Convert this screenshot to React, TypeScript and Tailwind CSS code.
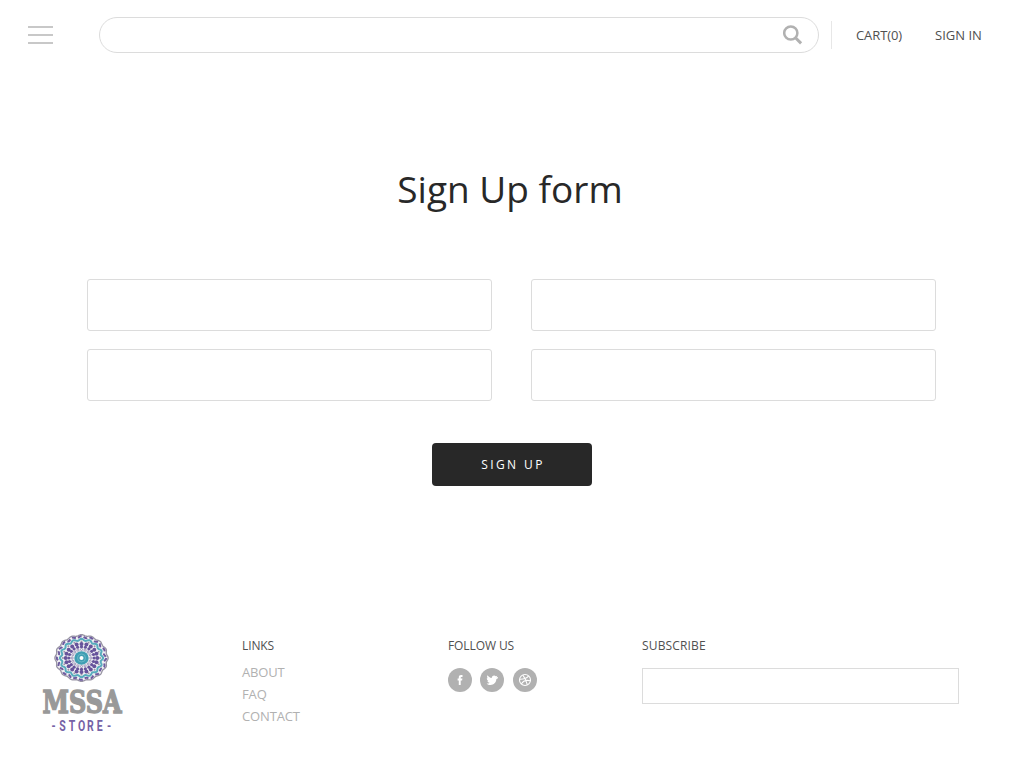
import React from "react";

const ring = (count: number) => Array.from({ length: count }, (_, i) => (i * 2 * Math.PI) / count);

function Dots({ count, rx, ry, r, fill, stroke, strokeWidth = 0 }: {
  count: number; rx: number; ry: number; r: number; fill: string; stroke?: string; strokeWidth?: number;
}) {
  return (
    <>
      {ring(count).map((a, i) => (
        <circle key={i} cx={40.5 + rx * Math.cos(a)} cy={25 + ry * Math.sin(a)} r={r} fill={fill} stroke={stroke} strokeWidth={strokeWidth} />
      ))}
    </>
  );
}

function wave(rx: number, ry: number, depth: number, lobes: number) {
  const points = ring(180).map((a) => {
    const k = 1 + depth * Math.cos(lobes * a);
    return `${(40.5 + rx * k * Math.cos(a)).toFixed(2)} ${(25 + ry * k * Math.sin(a)).toFixed(2)}`;
  });
  return `M${points.join("L")}Z`;
}

function Logo() {
  return (
    <svg width="82" height="102" viewBox="0 0 82 102" className="block overflow-visible" aria-label="MSSA Store">
      <path d={wave(26, 22.8, 0.025, 16)} fill="#f1f0f3" stroke="#9793a3" strokeWidth="1.3" />
      <path d={wave(23.8, 21, 0.04, 16)} fill="none" stroke="#6d5b9f" strokeWidth="2" strokeDasharray="4 2.2" />
      <path d={wave(20.6, 18.3, 0.05, 16)} fill="#f1f1f4" stroke="#58acbd" strokeWidth="2" />
      <Dots count={16} rx={18.6} ry={16.5} r={1} fill="#9a96aa" />
      <Dots count={20} rx={15.8} ry={14.1} r={2} fill="#67549b" />
      <Dots count={20} rx={12.6} ry={11.3} r={1.6} fill="#67549b" />
      <Dots count={16} rx={9.4} ry={8.5} r={1.1} fill="#f0f0f4" stroke="#74669b" strokeWidth={0.6} />
      <ellipse cx="40.5" cy="25" rx="7.2" ry="6.8" fill="#409eb3" />
      <circle cx="40.5" cy="25" r="4" fill="none" stroke="#72bbc9" strokeWidth="0.8" />
      <circle cx="40.5" cy="25" r="2" fill="#fff" />
      <text x="1.5" y="79.5" textLength="79" lengthAdjust="spacingAndGlyphs" fill="#999" stroke="#999" strokeWidth="1.5" className="font-['DejaVu_Serif',serif] text-[31px] font-bold">MSSA</text>
      <g transform="scale(0.75 1)">
        <text x="14 24.5 37 49.5 61.5 74.5 88" y="98.5" fill="#7562a6" className="font-['Roboto',sans-serif] text-[14px] font-bold">-STORE-</text>
      </g>
    </svg>
  );
}

function Social({ children, label }: { children: React.ReactNode; label: string }) {
  return (
    <a href="#" aria-label={label} className="block size-6 rounded-full bg-[#b1b1b1]">
      <svg width="24" height="24" viewBox="0 0 24 24">{children}</svg>
    </a>
  );
}

export default function App() {
  return (
    <div className="h-[768px] w-[1025px] overflow-hidden bg-white font-['Open_Sans',sans-serif] text-[13px] text-[#505050]">
      <header className="flex h-[70px] items-center">
        <button aria-label="Menu" className="ml-7 flex w-[25px] flex-col gap-1.5">
          <span className="h-0.5 w-full bg-[#c8c8c8]" />
          <span className="h-0.5 w-full bg-[#c8c8c8]" />
          <span className="h-0.5 w-full bg-[#c8c8c8]" />
        </button>
        <div className="ml-[46px] flex h-9 w-[720px] items-center rounded-full border border-[#dcdcdc] pr-[15px]">
          <input aria-label="Search" className="min-w-0 flex-1 bg-transparent outline-none" />
          <svg width="20" height="20" viewBox="0 0 20 20" fill="none" stroke="#b1b1b1">
            <circle cx="7.8" cy="8" r="6.6" strokeWidth="2.5" />
            <path d="M12.7 13l5.4 5.4" strokeWidth="3" />
          </svg>
        </div>
        <span className="ml-3 h-7 w-px bg-[#e7e7e7]" />
        <a href="#" className="ml-6 w-[79px] pt-0.5 tracking-[-0.1px] whitespace-nowrap">CART(0)</a>
        <a href="#" className="pt-0.5 whitespace-nowrap">SIGN IN</a>
      </header>

      <main className="h-[560px] pt-[93px]">
        <h1 className="pr-[5px] text-center text-[37px] leading-[52px] text-[#282828]">Sign Up form</h1>
        <form className="pt-16">
          <div className="ml-[87px] grid w-[849px] grid-cols-[405px_405px] gap-x-[39px] gap-y-[18px]">
            {["First name", "Last name", "Email", "Password"].map((name) => (
              <input key={name} aria-label={name} className="h-[52px] w-full rounded-[3px] border border-[#dcdcdc] px-4 outline-none" />
            ))}
          </div>
          <button type="button" className="mt-[42px] ml-[432px] block h-[43px] w-40 rounded bg-[#282828] pl-0.5 text-[12px] tracking-[2.4px] text-white">SIGN UP</button>
        </form>
      </main>

      <footer className="flex">
        <div className="ml-[41px] w-[201px] pt-[3px]"><Logo /></div>
        <div className="w-[206px] pt-[5px]">
          <h2 className="text-[12px] leading-[22px] tracking-[-0.1px]">LINKS</h2>
          <nav className="mt-1 flex flex-col text-[13px] leading-[22px] tracking-[-0.15px] text-[#b1b1b1]">
            <a href="#">ABOUT</a>
            <a href="#">FAQ</a>
            <a href="#">CONTACT</a>
          </nav>
        </div>
        <div className="w-[194px] pt-[5px]">
          <h2 className="text-[12px] leading-[22px] tracking-[-0.1px]">FOLLOW US</h2>
          <div className="mt-[11px] flex gap-2">
            <Social label="Facebook">
              <path fill="#fff" d="M10.8 17v-4.4H9.6v-2h1.2V9.3c0-1.6.9-2.3 2.3-2.3h1.4v2h-1c-.6 0-.8.3-.8.8v.8h1.7l-.3 2h-1.4V17z" />
            </Social>
            <Social label="Twitter">
              <path fill="#fff" d="M17.7 10.4l-1.3.7c-.2 3.5-2.7 5.9-5.8 5.9-1.7 0-3-.5-3.9-1.5 1.2.1 2.2-.1 2.9-.8-1.2-.2-1.9-.8-2.1-1.8h1c-1.2-.6-1.8-1.6-1.6-3l.9.4c-.9-1-.9-1.9-.3-3 1.1 1.5 2.3 2.4 4.2 2.8.1-1.5 1-2.5 2.4-2.5.7 0 1.3.2 1.7.7l1.5-.5-.8 1.4 1.5-.1z" />
            </Social>
            <div className="ml-px">
              <Social label="Dribbble">
                <g fill="none" stroke="#fff" strokeWidth="1.1">
                  <circle cx="12" cy="12" r="5.5" />
                  <path d="M9.8 7.2c2.4 2.9 3.8 5.8 4.4 9.5M6.6 11.2c4 .1 6.9-.8 9-3M8.3 16c1.8-3.1 5-4.3 9-3.2" />
                </g>
              </Social>
            </div>
          </div>
        </div>
        <div className="pt-[5px]">
          <h2 className="text-[12px] leading-[22px] tracking-[0.15px]">SUBSCRIBE</h2>
          <input aria-label="Email address" className="mt-[11px] block h-9 w-[317px] border border-[#dcdcdc] px-3 outline-none" />
        </div>
      </footer>
    </div>
  );
}
